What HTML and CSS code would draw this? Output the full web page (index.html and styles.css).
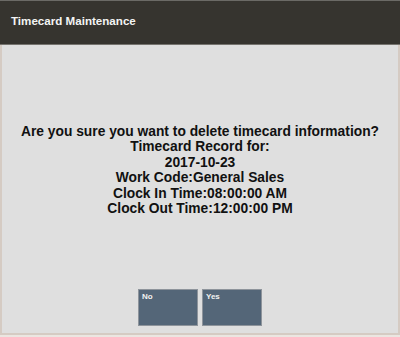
FILE: index.html
```html
<!DOCTYPE html>
<html lang="en">
<head>
    <meta charset="UTF-8">
    <title>Timecard Maintenance</title>
    <link rel="stylesheet" href="styles.css">
</head>
<body>
    <div class="dialog">
        <div class="header">
            <h1>Timecard Maintenance</h1>
        </div>
        <div class="content">
            <div class="message">
                <p>Are you sure you want to delete timecard information?</p>
                <p>Timecard Record for:</p>
                <p>2017-10-23</p>
                <p>Work Code:General Sales</p>
                <p>Clock In Time:08:00:00 AM</p>
                <p>Clock Out Time:12:00:00 PM</p>
            </div>
            <div class="actions">
                <button class="btn">No</button>
                <button class="btn">Yes</button>
            </div>
        </div>
    </div>
</body>
</html>
```

FILE: styles.css
```css
body {
    margin: 0;
    font-family: 'Liberation Sans', Arial, sans-serif;
    background-color: #ebe6e1;
}
.dialog {
    width: 400px;
    height: 337px;
    display: flex;
    flex-direction: column;
    box-sizing: border-box;
    padding-bottom: 2px;
}
.header {
    background-color: #36342f;
    border-top: 1px solid #6b6a66;
    border-bottom: 1px solid #75736e;
    height: 43px;
    display: flex;
    align-items: center;
    padding-left: 11px;
}
.header h1 {
    margin: 0;
    color: #f4f4f4;
    font-size: 11.6px;
    font-weight: bold;
    padding-bottom: 5px;
}
.content {
    flex: 1;
    background-color: #dfdfdf;
    border: 2px solid #d5cbc3;
    border-top: none;
    display: flex;
    flex-direction: column;
}
.message {
    padding-top: 79px;
    text-align: center;
    font-size: 13.8px;
    font-weight: bold;
    line-height: 15.4px;
    color: #111;
}
.message p {
    margin: 0;
}
.actions {
    margin-top: auto;
    margin-bottom: 7px;
    display: flex;
    justify-content: center;
    gap: 4px;
}
.btn {
    width: 60px;
    height: 37px;
    background-color: #546678;
    border: 1px solid #8e949b;
    color: #f2f2f2;
    font-family: 'Liberation Sans', Arial, sans-serif;
    font-size: 8px;
    font-weight: bold;
    text-align: left;
    padding: 2px 3px;
    display: flex;
    align-items: flex-start;
}
```
